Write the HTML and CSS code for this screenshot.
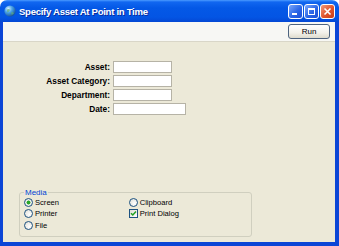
FILE: index.html
```html
<!DOCTYPE html>
<html>
    <head>
        <title>Specify Asset At Point in Time</title>
        <link rel="stylesheet" href="styles.css">
    </head>

    <body>
        <div class="window">
            <div class="titlebar">
                <svg class="appicon" width="12" height="12" viewBox="0 0 12 12">
                    <defs>
                        <radialGradient id="globe" cx="35%" cy="30%" r="75%">
                            <stop offset="0" stop-color="#d8f0ff"/>
                            <stop offset="0.45" stop-color="#4aa3e8"/>
                            <stop offset="1" stop-color="#17508f"/>
                        </radialGradient>
                    </defs>
                    <circle cx="6" cy="6" r="5.6" fill="url(#globe)"/>
                    <path d="M3 4.5 Q5 3.5 6 5 Q5 7 3.2 7.5 Z" fill="#5fae7a" opacity="0.7"/>
                    <path d="M7.5 7 Q9.5 6.5 9.8 8.5 Q8.5 10 7.2 9.2 Z" fill="#5fae7a" opacity="0.7"/>
                </svg>
                <span class="title">Specify Asset At Point in Time</span>
                <div class="controls">
                    <span class="ctl"><svg width="13" height="13" viewBox="0 0 13 13"><rect x="3" y="8" width="5" height="2" fill="#fff"/></svg></span>
                    <span class="ctl"><svg width="13" height="13" viewBox="0 0 13 13"><rect x="3.5" y="3.5" width="6" height="6" fill="none" stroke="#fff" stroke-width="1"/><rect x="3" y="3" width="7" height="2" fill="#fff"/></svg></span>
                    <span class="ctl close"><svg width="13" height="13" viewBox="0 0 13 13"><path d="M3.5 3.5 L9.5 9.5 M9.5 3.5 L3.5 9.5" stroke="#fff" stroke-width="1.6"/></svg></span>
                </div>
            </div>
            <div class="frame">
                <div class="toolbar">
                    <button class="run">Run</button>
                </div>
                <div class="content">
                    <div class="fields">
                        <label>Asset:</label><span class="field"></span>
                        <label>Asset Category:</label><span class="field"></span>
                        <label>Department:</label><span class="field"></span>
                        <label>Date:</label><span class="field wide"></span>
                    </div>
                    <fieldset class="media">
                        <legend>Media</legend>
                        <div class="opts">
                            <span class="opt"><i class="radio on"></i>Screen</span>
                            <span class="opt"><i class="radio"></i>Clipboard</span>
                            <span class="opt"><i class="radio"></i>Printer</span>
                            <span class="opt"><i class="check"><svg width="7" height="7" viewBox="0 0 7 7"><path d="M1 3.2 L2.8 5 L6 1.5" fill="none" stroke="#21a121" stroke-width="1.5"/></svg></i>Print Dialog</span>
                            <span class="opt"><i class="radio"></i>File</span>
                        </div>
                    </fieldset>
                </div>
            </div>
        </div>
    </body>
</html>
```

FILE: styles.css
```css
body{margin: 0;background: #fff;font-family: "Liberation Sans", Arial, sans-serif;color: #000;}
.window{width: 339px;height: 246px;display: flex;flex-direction: column;}

/* title bar */
.titlebar{height: 22px;flex: none;display: flex;align-items: center;padding-left: 4px;border-radius: 7px 7px 0 0;color: #fff;
    background: linear-gradient(#4b9bff 0, #1167f0 2px, #0458e6 8px, #0355e4 17px, #0448d4 22px);}
.appicon{margin-right: 3px;}
.title{font-weight: bold;font-size: 9.6px;letter-spacing: -0.3px;text-shadow: 1px 1px 0 #0a2d9e;}
.controls{margin-left: auto;margin-right: 4px;display: flex;gap: 1px;}
.ctl{width: 15px;height: 15px;box-sizing: border-box;border: 1px solid #fff;border-radius: 3px;display: flex;align-items: center;justify-content: center;
    background: linear-gradient(135deg, #7aa7fb, #2b66e6 55%, #1c4fd6);}
.ctl.close{background: linear-gradient(135deg, #f29a7c, #e0542c 55%, #c63c16);}

/* window body */
.frame{flex: 1;display: flex;flex-direction: column;border: solid #0b45d6;border-width: 0 4px 4px 3px;}
.toolbar{height: 19px;flex: none;background: #f7f7f4;border-bottom: 1px solid #d9d6c8;display: flex;justify-content: flex-end;align-items: flex-start;}
.run{width: 42px;height: 15px;margin: 2px 5px 0 0;padding: 0;border: 1px solid #4e6480;border-radius: 3px;font-family: inherit;font-size: 8px;color: #000;
    background: linear-gradient(#ffffff, #f2f1ea 60%, #dedbcd);}
.content{flex: 1;background: #ece9d8;display: flex;flex-direction: column;}

/* fields */
.fields{display: grid;grid-template-columns: 107px auto;column-gap: 3px;row-gap: 2px;margin-top: 19px;justify-items: start;align-items: center;}
.fields label{justify-self: end;font-weight: bold;font-size: 8.3px;line-height: 12px;}
.field{display: block;width: 59px;height: 12px;box-sizing: border-box;background: #fff;border: 1px solid #b6b3a6;}
.field.wide{width: 73px;}

/* media group */
.media{margin: auto 83px 5px 16px;padding: 0 0 5px 4px;border: 1px solid #d0cfbf;border-radius: 3px;min-width: 0;}
.media legend{color: #0046d5;font-size: 8px;line-height: 9px;padding: 0 1px;}
.opts{display: grid;grid-template-columns: 104.7px auto;grid-auto-rows: 11.5px;}
.opt{display: flex;align-items: center;font-size: 7.6px;}
.radio,.check{display: block;width: 9px;height: 9px;box-sizing: border-box;border: 1px solid #1d5281;margin-right: 2px;flex: none;}
.radio{border-radius: 50%;background: radial-gradient(circle at 65% 65%, #fff, #dcdcd4);}
.radio.on{background: radial-gradient(circle, #29a529 0 1.7px, #f4f4f0 2.3px, #dcdcd4 100%);}
.check{background: linear-gradient(135deg, #dcdcd4, #fff);display: flex;align-items: center;justify-content: center;}
```
